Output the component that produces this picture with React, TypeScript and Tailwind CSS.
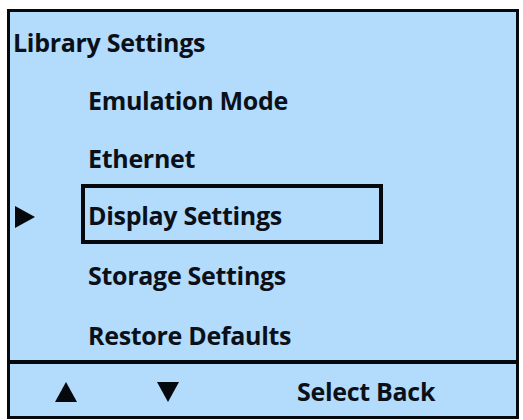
import React from "react";

const items = ["Emulation Mode", "Ethernet", "Display Settings", "Storage Settings"];
const selected = 2;

function Tri({ dir, w = 22, h = 20 }: { dir: "up" | "down" | "right"; w?: number; h?: number }) {
  const pts = dir === "up" ? "10,0 20,20 0,20" : dir === "down" ? "0,0 20,0 10,20" : "0,0 20,10 0,20";
  return (
    <svg width={w} height={h} viewBox="0 0 20 20" preserveAspectRatio="none" className="block">
      <polygon points={pts} fill="#05080c" />
    </svg>
  );
}

export default function App() {
  return (
    <div className="w-[523px] h-[420px] bg-white pt-[9px] pl-[7px]" style={{ fontFamily: "'Open Sans', Lato, sans-serif" }}>
      <div className="w-[512px] h-[410px] border-[3px] border-[#05080c] bg-[#b3dbfb] flex flex-col text-[#0b1018] font-bold">
        <div className="flex-1 flex flex-col pt-[2px] min-h-0">
          <div className="h-[58px] shrink-0 flex items-center pl-[3px] text-[25px] tracking-[-0.3px]">Library Settings</div>
          {items.map((t, i) =>
            i === selected ? (
              <div key={t} className="h-[58px] shrink-0 flex items-center">
                <div className="w-[71px] pl-[5px] flex items-center">
                  <Tri dir="right" w={20} h={22} />
                </div>
                <div className="h-[60px] -mt-[6px] w-[302px] flex items-center pl-[3px] pt-[4px] text-[25px] tracking-[-0.3px] border-[4px] border-[#05080c]">
                  {t}
                </div>
              </div>
            ) : (
              <div key={t} className={(i === 3 ? "h-[59px]" : "h-[58px]") + " shrink-0 flex items-center"}>
                <div className="w-[71px]" />
                <div className="pl-[7px] text-[25px] tracking-[-0.3px]">{t}</div>
              </div>
            )
          )}
          <div className="flex-1 flex items-center pt-[6px]">
            <div className="w-[71px]" />
            <div className="pl-[7px] text-[25px] tracking-[-0.3px]">Restore Defaults</div>
          </div>
        </div>
        <div className="h-[56px] shrink-0 border-t-[4px] border-[#05080c] flex items-center pt-[4px]">
          <div className="ml-[45px]"><Tri dir="up" /></div>
          <div className="ml-[80px]"><Tri dir="down" /></div>
          <div className="ml-[118px] text-[25px] tracking-[-0.3px]">Select Back</div>
        </div>
      </div>
    </div>
  );
}
